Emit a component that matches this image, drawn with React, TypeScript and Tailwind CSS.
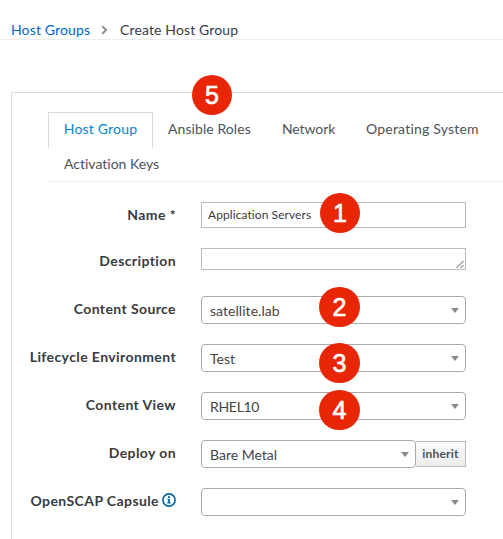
import type { ReactNode } from "react";

function Badge({ n, className }: { n: number; className: string }) {
  return (
    <span
      className={`absolute z-10 flex h-10 items-center justify-center rounded-full bg-[#e82606] pt-px font-['Liberation_Sans',sans-serif] text-[25px] leading-none text-white [-webkit-text-stroke:0.7px_white] ${className}`}
    >
      {n}
    </span>
  );
}

function Row({ label, className, children }: { label: ReactNode; className: string; children: ReactNode }) {
  return (
    <div className={`flex ${className}`}>
      <div className="mr-[25px] flex w-[164px] shrink-0 justify-end whitespace-nowrap pt-[3px] text-[14px] font-bold leading-[20px] tracking-[0.4px] text-[#393b3e]">
        {label}
      </div>
      <div className="relative flex w-[265px] shrink-0">{children}</div>
    </div>
  );
}

function Select({ value }: { value?: ReactNode }) {
  return (
    <div className="flex h-7 flex-1 items-center justify-between rounded-[4px] border border-[#aaa] bg-white pl-2 pr-[6px] text-[14px] text-[#444]">
      <span className="pt-px leading-[20px]">{value}</span>
      <span className="h-0 w-0 border-x-[4px] border-t-[5px] border-x-transparent border-t-[#888]" />
    </div>
  );
}

export default function App() {
  return (
    <div className="h-[539px] w-[503px] overflow-hidden bg-white font-['Lato',sans-serif] text-[14px] text-[#393b3e] [font-variant-ligatures:none]">
      <nav className="flex h-10 items-center border-b border-[#ededed] pb-[2px] pl-[11px] pt-[22px] leading-[20px]">
        <a className="w-[79px] whitespace-nowrap tracking-[0.14px] text-[#0066cc]">Host Groups</a>
        <svg className="ml-[11px] mr-[12px] shrink-0" width="7" height="10" viewBox="0 0 7 10" fill="none" stroke="#8a8d90" strokeWidth="1.9">
          <path d="M1.2 1.1 5.1 5 1.2 8.9" />
        </svg>
        <span className="whitespace-nowrap tracking-[0.14px]">Create Host Group</span>
      </nav>
      <main className="relative ml-[11px] mt-[52px] h-[460px] border-l border-t border-[#dcdcdc]">
        <Badge n={5} className="left-[180px] top-[-18px] w-10" />
        <div className="ml-9 mt-[19px] flex h-[70px] flex-wrap content-start border-b border-[#ededed] leading-[20px] text-[#4d5258]">
          <div className="flex h-[36px] w-[105px] justify-center whitespace-nowrap border border-b-0 border-[#d9d9d9] pt-[6px] text-[#0088ce]">
            <span className="tracking-[0.2px]">Host Group</span>
          </div>
          <div className="w-[114px] whitespace-nowrap pl-[15px] pt-[7px] tracking-[0.08px]">Ansible Roles</div>
          <div className="w-[84px] whitespace-nowrap pl-[15px] pt-[7px] tracking-[-0.1px]">Network</div>
          <div className="w-[145px] whitespace-nowrap pl-[15px] pt-[7px] tracking-[0.2px]">Operating System</div>
          <div className="w-full pl-4 pt-[6px]">Activation Keys</div>
        </div>
        <form className="flex flex-col pt-5">
          <Row className="h-[46px]" label="Name *">
            <div className="flex h-[26px] w-full items-center border border-[#bbb] pl-[6px] text-[12px] tracking-[0.08px] text-[#393b3e]">
              Application Servers
            </div>
            <Badge n={1} className="left-[119px] top-[-9px] w-10" />
          </Row>
          <Row className="h-12" label="Description">
            <div className="flex h-[22px] w-full items-end justify-end border border-[#bbb]">
              <svg width="9" height="9" viewBox="0 0 9 9" stroke="#555" strokeWidth="1">
                <path d="M0.5 8 7.5 1M4.5 8 7.5 5" />
              </svg>
            </div>
          </Row>
          <Row className="h-12" label="Content Source">
            <Select value={<span className="tracking-[0.05px]">satellite.lab</span>} />
            <Badge n={2} className="left-[118px] top-[-9px] w-[41px]" />
          </Row>
          <Row className="h-12" label="Lifecycle Environment">
            <Select value="Test" />
            <Badge n={3} className="left-[118px] top-[-1px] w-[41px]" />
          </Row>
          <Row className="h-12" label="Content View">
            <Select value={<span className="tracking-[-0.3px]">RHEL10</span>} />
            <Badge n={4} className="left-[118px] top-[-2px] w-[41px]" />
          </Row>
          <Row className="h-12" label="Deploy on">
            <Select value="Bare Metal" />
            <button
              type="button"
              className="mt-px h-[26px] w-[50px] border border-l-0 border-[#bbb] bg-linear-to-b from-[#fafafa] to-[#ededed] text-[12px] font-bold tracking-[0.2px] text-[#4d5258]"
            >
              inherit
            </button>
          </Row>
          <Row
            className="h-12"
            label={
              <>
                <span>OpenSCAP Capsule</span>
                <svg className="ml-[3px] mt-[2px]" width="14" height="14" viewBox="0 0 14 14" fill="none">
                  <circle cx="7" cy="7" r="6.1" stroke="#0066a5" strokeWidth="1.6" />
                  <path d="M6 3.3h2v1.8H6zM5.4 6h2.5v3.3h.8v1.2H5.2V9.3h.9V7.1h-.7z" fill="#0066a5" />
                </svg>
              </>
            }
          >
            <Select />
          </Row>
        </form>
      </main>
    </div>
  );
}
